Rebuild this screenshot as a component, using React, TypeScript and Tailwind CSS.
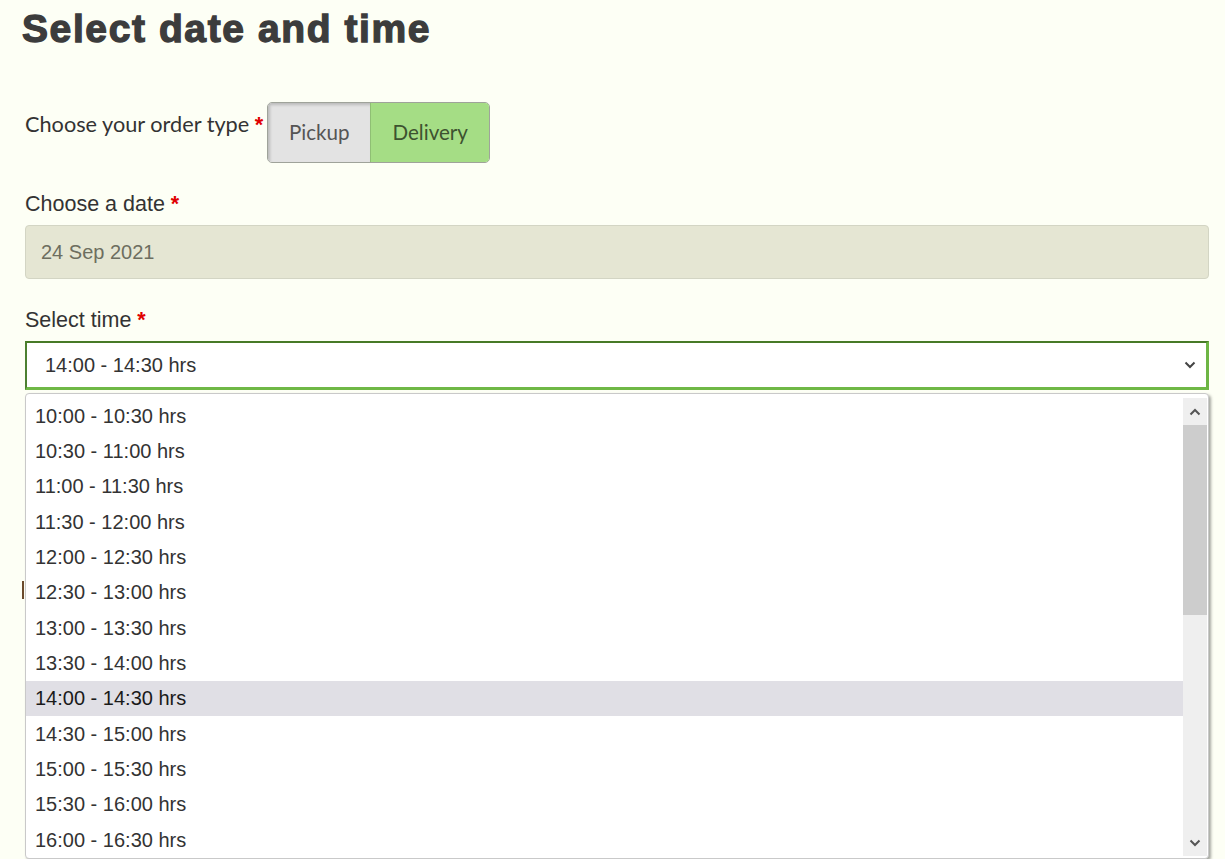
import React from "react";

const slots = [
  "10:00 - 10:30 hrs",
  "10:30 - 11:00 hrs",
  "11:00 - 11:30 hrs",
  "11:30 - 12:00 hrs",
  "12:00 - 12:30 hrs",
  "12:30 - 13:00 hrs",
  "13:00 - 13:30 hrs",
  "13:30 - 14:00 hrs",
  "14:00 - 14:30 hrs",
  "14:30 - 15:00 hrs",
  "15:00 - 15:30 hrs",
  "15:30 - 16:00 hrs",
  "16:00 - 16:30 hrs",
];

const selected = "14:00 - 14:30 hrs";

function Chevron({ up = false, className = "" }: { up?: boolean; className?: string }) {
  return (
    <svg width="12" height="8" viewBox="0 0 12 8" className={className}>
      <path
        d={up ? "M1.5 6.5 L6 2 L10.5 6.5" : "M1.5 1.5 L6 6 L10.5 1.5"}
        fill="none"
        stroke="currentColor"
        strokeWidth="2"
      />
    </svg>
  );
}

function Star() {
  return <span className="text-[#e00000] font-bold font-['Liberation_Sans',Arial,sans-serif]">*</span>;
}

export default function App() {
  return (
    <div className="min-h-[859px] bg-[#fdfff5] text-[#333] font-['Liberation_Sans',Arial,sans-serif] overflow-hidden">
      <div className="pl-[25px] pr-[16px]">
        <h1 className="pt-[6px] -ml-[3px] text-[39px] leading-[46px] font-bold tracking-[1.6px] text-[#3c3c3c] [-webkit-text-stroke:1.3px_#3c3c3c]">
          Select date and time
        </h1>

        {/* order type */}
        <div className="flex items-start mt-[50px]">
          <div className="pt-[9px] pr-[4px] font-['Lato',sans-serif] text-[21.7px] leading-[26px] text-[#333]">
            Choose your order type <Star />
          </div>
          <div className="flex h-[61px] rounded-[5px] overflow-hidden border border-[#9fa39a] font-['Lato',sans-serif] text-[20.6px]">
            <div className="w-[103px] flex items-center justify-center bg-[#e3e3e3] text-[#555] shadow-[inset_2px_2px_3px_rgba(0,0,0,0.18)] border-r border-[#8fbf74]">
              Pickup
            </div>
            <div className="w-[118px] flex items-center justify-center bg-[#a5dd85] text-[#3d5230]">
              Delivery
            </div>
          </div>
        </div>

        {/* date */}
        <div className="mt-[28px] text-[21.5px] leading-[26px]">
          Choose a date <Star />
        </div>
        <div className="mt-[8px] h-[54px] rounded-[4px] border border-[#d3d5c4] bg-[#e5e6d3] flex items-center pl-[15px] text-[20px] text-[#6d6e5f]">
          24 Sep 2021
        </div>

        {/* time */}
        <div className="mt-[28px] text-[21.5px] leading-[26px]">
          Select time <Star />
        </div>
        <div className="relative mt-[8px]">
          <div className="h-[49px] border-t-2 border-l-2 border-r-[3px] border-b-[3px] border-t-[#477a27] border-l-[#4c8030] border-r-[#6db544] border-b-[#6fb846] bg-white flex items-center justify-between pl-[18px] pr-[10px] text-[20px] text-[#333]">
            <span>{selected}</span>
            <Chevron className="text-[#444]" />
          </div>

          {/* hidden content peeking behind the list */}
          <div className="absolute left-[-3px] top-[240px] w-[2px] h-[18px] bg-[#6b4a2c]" />

          <div className="absolute left-0 top-[52px] w-[1184px] h-[466px] bg-white border border-[#c9c9c9] rounded-[4px] shadow-[2px_2px_3px_rgba(0,0,0,0.35)] flex pt-[4px] pb-[2px] overflow-hidden">
            <ul className="flex-1">
              {slots.map((s) => (
                <li
                  key={s}
                  className={`h-[35.33px] flex items-center pl-[9px] text-[20px] ${
                    s === selected ? "bg-[#e0dfe5] text-[#1a1a1a]" : "text-[#333]"
                  }`}
                >
                  {s}
                </li>
              ))}
            </ul>
            <div className="w-[24px] mr-[1px] bg-[#efefef] flex flex-col">
              <div className="h-[27px] flex items-center justify-center text-[#555]">
                <Chevron up />
              </div>
              <div className="h-[190px] bg-[#cdcdcd]" />
              <div className="flex-1" />
              <div className="h-[27px] flex items-center justify-center text-[#555]">
                <Chevron />
              </div>
            </div>
          </div>
        </div>
      </div>
    </div>
  );
}
